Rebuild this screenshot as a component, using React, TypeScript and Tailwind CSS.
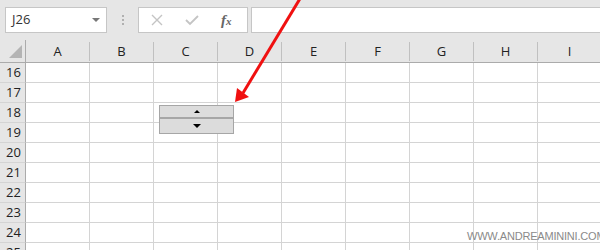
const COLUMNS = ["A", "B", "C", "D", "E", "F", "G", "H", "I"];
const ROWS = [16, 17, 18, 19, 20, 21, 22, 23, 24, 25];

const FONT = "font-['Open_Sans','Noto_Sans',sans-serif]";

export default function App() {
  return (
    <div className={`relative h-[250px] w-[600px] overflow-hidden bg-white ${FONT} text-[13px] text-[#222]`}>
      {/* formula bar */}
      <div className="flex h-[40px] items-start gap-0 bg-[#e6e6e6] pt-[7px] pl-[5px]">
        <div className="flex h-[26px] w-[102px] items-center justify-between border border-[#c6c6c6] bg-white pl-[6px] pr-[6px]">
          <span className="text-[13px] text-[#333]">J26</span>
          <span className="h-0 w-0 border-x-[4px] border-t-[4px] border-x-transparent border-t-[#777]" />
        </div>
        <div className="flex h-[26px] w-[31px] flex-col items-center justify-center gap-[2px]">
          <span className="h-[2px] w-[2px] bg-[#b0b0b0]" />
          <span className="h-[2px] w-[2px] bg-[#b0b0b0]" />
          <span className="h-[2px] w-[2px] bg-[#b0b0b0]" />
        </div>
        <div className="flex h-[26px] w-[110px] items-center border border-[#c6c6c6] bg-white">
          <svg width="12" height="12" viewBox="0 0 12 12" className="ml-[12px]">
            <path d="M1 1 L11 11 M11 1 L1 11" stroke="#c4c4c4" strokeWidth="1.4" />
          </svg>
          <svg width="14" height="12" viewBox="0 0 14 12" className="ml-[22px]">
            <path d="M1 6 L5 10 L13 2" stroke="#c4c4c4" strokeWidth="1.8" fill="none" />
          </svg>
          <span className="ml-[22px] font-['Liberation_Serif',serif] text-[15px] font-bold italic leading-none text-[#666]">
            f<span className="text-[11px]">x</span>
          </span>
        </div>
        <div className="ml-[3px] h-[26px] flex-1 border border-r-0 border-[#c6c6c6] bg-white" />
      </div>

      {/* column headers */}
      <div className="flex h-[23px] border-b border-[#ababab] bg-[#e6e6e6]">
        <div className="relative w-[26px] shrink-0 border-r border-[#ababab]">
          <span className="absolute right-[3px] bottom-[4px] h-0 w-0 border-b-[13px] border-l-[13px] border-b-[#b4b4b4] border-l-transparent" />
        </div>
        {COLUMNS.map((c) => (
          <div key={c} className="flex w-[64px] shrink-0 items-end pb-[1px]">
            <div className="flex h-[19px] flex-1 items-center justify-center text-[13px] text-[#222]">{c}</div>
            <div className="h-[19px] w-px bg-[#c0c0c0]" />
          </div>
        ))}
      </div>

      {/* rows */}
      {ROWS.map((r) => (
        <div key={r} className="flex h-[20px]">
          <div className="flex w-[26px] shrink-0 items-center border-r border-b border-r-[#ababab] border-b-[#d4d4d4] bg-[#e6e6e6] pl-[6px] text-[13px] text-[#222]">
            {r}
          </div>
          {COLUMNS.map((c) => (
            <div key={c} className="w-[64px] shrink-0 border-r border-b border-[#d4d4d4]" />
          ))}
        </div>
      ))}

      {/* spin button control */}
      <div className="absolute top-[105px] left-[159px] flex h-[29px] w-[75px] flex-col border border-[#a6a6a6] bg-[#dcdcdc]">
        <div className="flex h-[13px] items-center justify-center border-b-2 border-[#a6a6a6]">
          <span className="h-0 w-0 border-x-[3px] border-b-[3px] border-x-transparent border-b-black" />
        </div>
        <div className="flex flex-1 items-center justify-center">
          <span className="h-0 w-0 border-x-[4px] border-t-[4px] border-x-transparent border-t-black" />
        </div>
      </div>

      {/* red arrow */}
      <svg className="absolute inset-0" width="600" height="250" viewBox="0 0 600 250">
        <line x1="301" y1="-3" x2="243" y2="93" stroke="#f01010" strokeWidth="3" />
        <polygon points="235,102 237,88 249,97" fill="#f01010" />
      </svg>

      {/* watermark */}
      <div className="absolute top-[229px] left-[467px] whitespace-nowrap font-['Liberation_Sans',sans-serif] text-[11px] leading-[14px] tracking-[-0.2px] text-[#8a8a8a]">
        WWW.ANDREAMININI.COM
      </div>
    </div>
  );
}
